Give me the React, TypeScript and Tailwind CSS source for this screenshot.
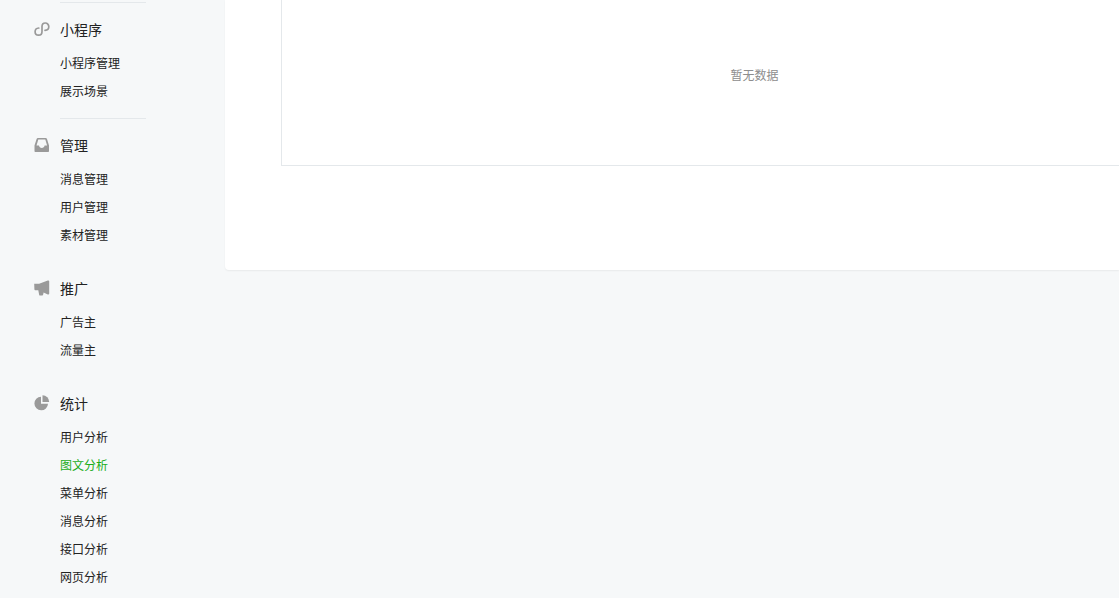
import type { ReactNode } from 'react'
import clsx from 'clsx'

type Section = {
    title: string
    icon: ReactNode
    items: string[]
    divider?: boolean
}

const MiniProgramIcon = () => (
    <svg viewBox="0 0 16 16" className="size-4" fill="none" stroke="currentColor" strokeWidth="1.7" strokeLinecap="round" aria-hidden="true">
        <path d="M11 9.400c2.300-.2 3.800-1.600 3.800-3.700 0-2.100-1.500-3.700-3.500-3.700S8 3.500 8 5.500v5c0 2-1.300 3.700-3.400 3.700S1.100 12.700 1.100 10.700c0-2.100 1.500-3.500 3.700-3.700" />
    </svg>
)

const InboxIcon = () => (
    <svg viewBox="0 0 16 16" className="size-4" fill="currentColor" aria-hidden="true">
        <path fillRule="evenodd" d="M4 1h7.600c.7 0 1.200.4 1.400 1l2 6.500V14c0 .6-.4 1-1 1H1.500c-.6 0-1-.4-1-1V8.500L2.600 2c.2-.6.7-1 1.400-1zm.3 1.500L2.500 8.600H5c.2 1.500 1.300 2.500 2.800 2.500s2.600-1 2.800-2.500h2.500l-1.800-6.100z" />
    </svg>
)

const MegaphoneIcon = () => (
    <svg viewBox="0 0 16 16" className="size-4" fill="currentColor" aria-hidden="true">
        <path d="M.2 3.800h4.900L13.800.6c.8-.3 1.400 0 1.400.7v12.500c0 .7-.6 1-1.400.7L9.600 12.500l-.5 2.300c-.1.500-.4.700-.8.700H6c-.4 0-.7-.2-.8-.6l-.9-4.700H1.500C.8 10.200.5 9.800.4 9.200z" />
    </svg>
)

const PieIcon = () => (
    <svg viewBox="0 0 16 16" className="size-4" fill="currentColor" aria-hidden="true">
        <path d="M7 1.700v7h7a6.800 6.800 0 1 1-7-7z" />
        <path d="M8.500.3a6.800 6.800 0 0 1 6.700 6.800H8.500z" />
    </svg>
)

const sections: Section[] = [
    { title: '小程序', icon: <MiniProgramIcon />, items: ['小程序管理', '展示场景'], divider: true },
    { title: '管理', icon: <InboxIcon />, items: ['消息管理', '用户管理', '素材管理'], divider: true },
    { title: '推广', icon: <MegaphoneIcon />, items: ['广告主', '流量主'] },
    { title: '统计', icon: <PieIcon />, items: ['用户分析', '图文分析', '菜单分析', '消息分析', '接口分析', '网页分析'] },
]

const activeItem = '图文分析'

function MenuSection({ title, icon, items, divider }: Section) {
    return (
        <section>
            {divider && <hr className="ml-[60px] w-[86px] border-t border-[#e4e8eb]" />}
            <div className="py-[13px]">
                <h2 className="flex h-[26px] items-center pl-[34px] text-sm">
                    <span className="mr-2.5 text-[#9a9a9a]">{icon}</span>
                    {title}
                </h2>
                <ul className="mt-[7px] pl-[60px] text-xs">
                    {items.map((item) => (
                        <li key={item}>
                            <a
                                href="#"
                                className={clsx('block leading-7', item === activeItem && 'text-[#1aad19]')}
                                aria-current={item === activeItem ? 'page' : undefined}
                            >
                                {item}
                            </a>
                        </li>
                    ))}
                </ul>
            </div>
        </section>
    )
}

export default function App() {
    return (
        <div className="flex min-h-screen items-start overflow-hidden bg-[#f6f8f9] font-['Noto_Sans_CJK_SC',sans-serif] text-[#222]">
            <nav className="w-[225px] shrink-0 pt-0.5">
                {sections.map((section) => (
                    <MenuSection key={section.title} {...section} />
                ))}
            </nav>
            <main className="min-w-0 flex-1 rounded-bl-sm bg-white pb-[104px] pl-14 shadow-[0_1px_2px_rgba(0,0,0,0.06)]">
                <div className="border-b border-l border-[#e4e8eb] pt-[61px] pb-[76px] pl-[108px] text-center text-xs leading-7 text-[#8d8d8d]">
                    暂无数据
                </div>
            </main>
        </div>
    )
}
